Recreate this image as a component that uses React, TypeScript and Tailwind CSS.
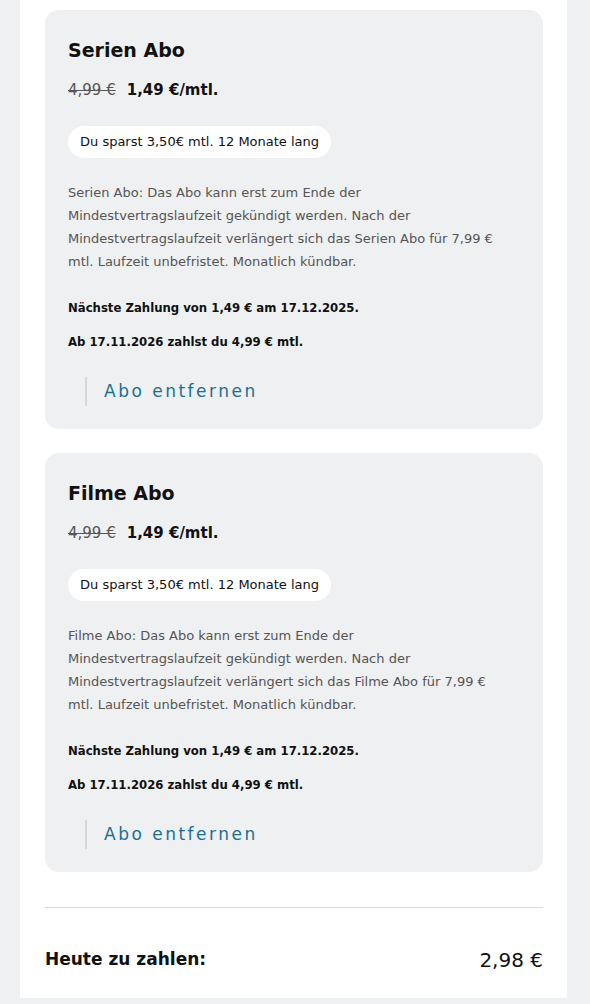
import React from "react";

const font = { fontFamily: '"DejaVu Sans", "Liberation Sans", Arial, sans-serif' };

function Card({ name }: { name: string }) {
  return (
    <div className="rounded-[14px] bg-[#eff0f2] px-[23px] pt-[26px] pb-[23px]">
      <h2 className="text-[19px] leading-[28px] font-bold text-[#111]">{name}</h2>
      <div className="mt-[15px] flex items-center gap-[11px] leading-[22px]">
        <span className="text-[15px] text-[#555] line-through">4,99 €</span>
        <span className="text-[15px] font-bold text-[#111]">1,49 €/mtl.</span>
      </div>
      <div className="mt-[25px] inline-flex h-[32px] items-center rounded-full bg-white px-[12px] text-[13px] text-[#111]">
        Du sparst 3,50€ mtl. 12 Monate lang
      </div>
      <p className="mt-[23px] text-[13px] leading-[23px] text-[#555]">
        {name}: Das Abo kann erst zum Ende der
        <br />
        Mindestvertragslaufzeit gekündigt werden. Nach der
        <br />
        Mindestvertragslaufzeit verlängert sich das {name} für 7,99 €
        <br />
        mtl. Laufzeit unbefristet. Monatlich kündbar.
      </p>
      <p className="mt-[25px] text-[11.7px] leading-[20px] font-bold text-[#111]">
        Nächste Zahlung von 1,49 € am 17.12.2025.
      </p>
      <p className="mt-[14px] text-[11.7px] leading-[20px] font-bold text-[#111]">
        Ab 17.11.2026 zahlst du 4,99 € mtl.
      </p>
      <div className="mt-[25px] ml-[17px] flex h-[29px] items-center border-l-2 border-[#d6d7d9] pl-[17px]">
        <span className="text-[17px] tracking-[2.5px] text-[#1a6f95]">Abo entfernen</span>
      </div>
    </div>
  );
}

export default function App() {
  return (
    <div className="min-h-[1004px] bg-[#eff0f2] pl-[20px] pr-[23px] pb-[7px]" style={font}>
      <div className="bg-white pl-[25px] pr-[24px] pt-[10px]">
        <div className="flex flex-col gap-[24px]">
          <Card name="Serien Abo" />
          <Card name="Filme Abo" />
        </div>
        <div className="mt-[35px] h-px bg-[#d8d9db]" />
        <div className="flex h-[90px] items-center justify-between pt-[14px]">
          <span className="text-[17px] font-bold text-[#111]">Heute zu zahlen:</span>
          <span className="text-[20px] text-[#111]">2,98 €</span>
        </div>
      </div>
    </div>
  );
}
